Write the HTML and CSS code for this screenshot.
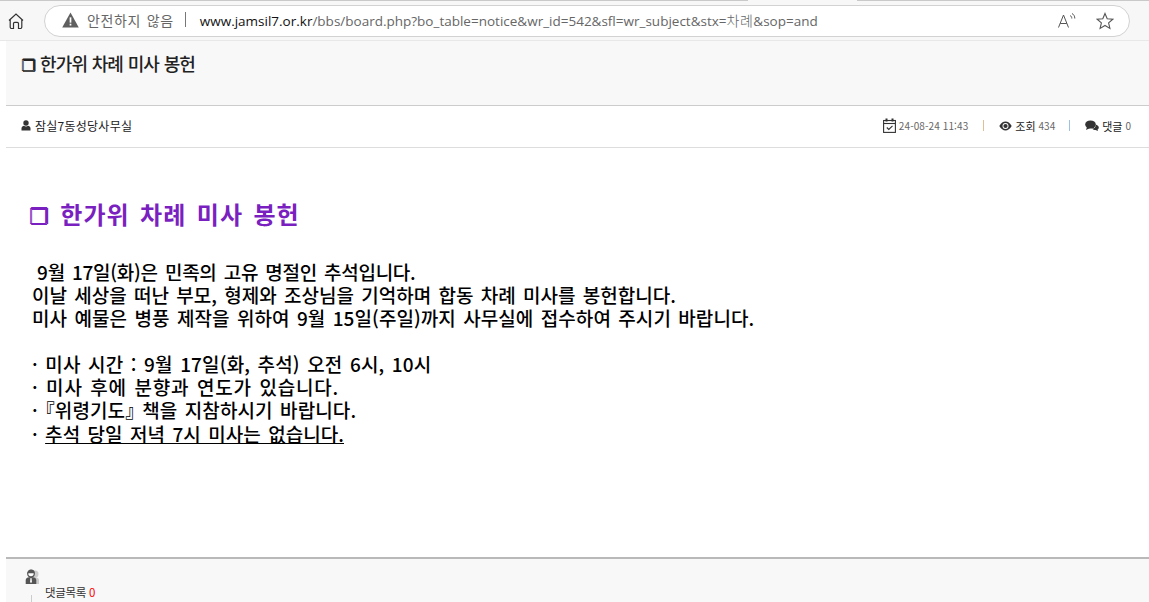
FILE: index.html
```html
<!DOCTYPE html>
<html lang="ko">
<head>
<meta charset="utf-8">
<title>한가위 차례 미사 봉헌</title>
<link rel="stylesheet" href="styles.css">
</head>
<body>
<div class="chrome">
  <div class="tabline"><span class="tl a"></span><span class="tl b"></span></div>
  <div class="toolbar">
    <svg class="home" width="18" height="18" viewBox="0 0 18 18" fill="none" stroke="#333" stroke-width="1.2"><path d="M2 8.5 9 2l7 6.500M3.200 7.500v7.500a1.500 1.500 0 0 0 1.500 1.500h1.800v-5a1.200 1.200 0 0 1 1.200-1.200h2.600a1.200 1.200 0 0 1 1.200 1.200v5h1.800a1.500 1.500 0 0 0 1.500-1.500V7.500"/></svg>
    <div class="omnibox">
      <svg class="warn" width="17" height="16" viewBox="0 0 16 15"><path d="M8 .5 15.800 14.500H.2z" fill="#5f5f5f"/><rect x="7.200" y="5" width="1.600" height="5" fill="#fff"/><rect x="7.200" y="11" width="1.600" height="1.700" fill="#fff"/></svg>
      <span class="insecure">안전하지 않음</span>
      <span class="sep"></span>
      <span class="url"><b>www.jamsil7.or.kr</b>/bbs/board.php?bo_table=notice&amp;wr_id=542&amp;sfl=wr_subject&amp;stx=<span class="q">차례</span>&amp;sop=and</span>
      <span class="omni-icons">
        <svg width="20" height="18" viewBox="0 0 20 18" fill="none" stroke="#555" stroke-width="1"><path d="M1.500 15.500 6.500 3l5 12.500M3.200 11.500h6.600M13 3.500c1.200.6 1.800 1.500 1.800 3M15 1.500c1.800 1 2.800 2.600 2.800 5"/></svg>
        <svg width="18" height="18" viewBox="0 0 18 18" fill="none" stroke="#555" stroke-width="1.100"><path d="M9 1.500 11.200 6.700l5.600.5-4.200 3.700 1.300 5.500L9 13.500l-4.900 2.900 1.300-5.500L1.200 7.200l5.600-.5z"/></svg>
      </span>
    </div>
  </div>
</div>
<main class="page">
  <header class="head">
    <h1 class="title"><span class="glyph">❐</span> 한가위 차례 미사 봉헌</h1>
  </header>
  <section class="info">
    <div class="author">
      <svg width="10" height="11" viewBox="0 0 10 11" fill="#333"><circle cx="5" cy="3" r="2.700"/><path d="M.5 10.500V8.300C.5 6.800 2 6 3 5.800c1.200.8 2.800.8 4 0 1 .2 2.500 1 2.500 2.500v2.200z"/></svg>
      <span>잠실7동성당사무실</span>
    </div>
    <div class="meta">
      <span class="mi">
        <svg width="13" height="15" viewBox="0 0 13 15" fill="none" stroke="#333" stroke-width="1.100"><rect x=".6" y="2.500" width="11.800" height="11.900"/><path d="M.6 5.500h11.800" /><path d="M3.500.5v3M9.500.5v3" stroke-width="2"/><path d="M3.800 9.500l2 2 3.700-3.700"/></svg>
        <span class="num date">24-08-24 11:43</span>
      </span>
      <i class="bar orange"></i>
      <span class="mi">
        <svg width="13" height="10" viewBox="0 0 13 10"><path d="M.3 5C2 2 4.200.6 6.500.6S11 2 12.700 5C11 8 8.800 9.400 6.500 9.400S2 8 .3 5z" fill="#333"/><circle cx="6.500" cy="5" r="3" fill="#fff"/><circle cx="6.500" cy="5" r="2.100" fill="#333"/></svg>
        <span class="lab">조회</span> <span class="num">434</span>
      </span>
      <i class="bar blue"></i>
      <span class="mi">
        <svg width="14" height="11" viewBox="0 0 14 11" fill="#333"><ellipse cx="5.500" cy="4.500" rx="5.300" ry="4.100"/><path d="M2 7l-1 3 4-2zM10.500 4.500c2 .5 3.300 1.700 3.300 3 0 1-.6 1.700-1.300 2.200l.5 1.300-2.500-1c-1.300 0-2.500-.4-3.200-1.300 2 0 3.900-2 3.200-4.200z"/></svg>
        <span class="lab">댓글</span> <span class="num">0</span>
      </span>
    </div>
  </section>
  <article class="content">
    <h2 class="heading"><span class="glyph">❐</span> 한가위 차례 미사 봉헌</h2>
    <p class="t1">&nbsp;9월 17일(화)은 민족의 고유 명절인 추석입니다.</p>
    <p>이날 세상을 떠난 부모, 형제와 조상님을 기억하며 합동 차례 미사를 봉헌합니다.</p>
    <p class="t3">미사 예물은 병풍 제작을 위하여 9월 15일(주일)까지 사무실에 접수하여 주시기 바랍니다.</p>
    <p>&nbsp;</p>
    <p class="t5">· 미사 시간 : 9월 17일(화, 추석) 오전 6시, 10시</p>
    <p class="t6">· 미사 후에 분향과 연도가 있습니다.</p>
    <p class="t7">· <span class="brk">『</span>위령기도<span class="brk">』</span> 책을 지참하시기 바랍니다.</p>
    <p class="t8">· <u>추석 당일 저녁 7시 미사는 없습니다.</u></p>
  </article>
  <section class="comments">
    <svg class="avatar" width="15" height="16" viewBox="0 0 15 16"><circle cx="10" cy="5" r="3.500" fill="#ccc"/><path d="M7 15V10c0-1 2-2 3-2s4 1 4 3v4z" fill="#ccc"/><circle cx="6" cy="4.500" r="3.300" fill="#fff" stroke="#555" stroke-width="1.200"/><path d="M2.500 4.200C3 1.500 4.500.8 6 .8s3 .7 3.500 3.400z" fill="#555"/><path d="M.7 15v-4c0-2 2-3 5.300-3s5.300 1 5.300 3v4z" fill="#555"/><path d="M5.500 9h1l.5 4.500H5z" fill="#fff"/></svg>
    <div class="clabel">댓글목록 <em>0</em></div>
    <span class="tick"></span>
  </section>
</main>
</body>
</html>
```
FILE: styles.css
```css
* { box-sizing: border-box; }
html, body { margin: 0; height: 602px; overflow: hidden; background: #fff; }
body { font-family: "Noto Sans CJK KR", "Noto Sans", sans-serif; color: #000; }
.chrome { height: 41px; background: #f7f7f7; border-bottom: 1px solid #e8e8e8; }
.tabline { height: 1px; display: flex; justify-content: space-between; background: #f7f7f7; }
.tl { display: block; height: 1px; background: #c9c9c9; }
.tl.a { width: 748px; }
.tl.b { width: 292px; }
.toolbar { display: flex; align-items: center; height: 39px; padding: 3px 19px 3px 7px; }
.home { flex: none; margin-right: 19px; }
.omnibox { flex: 1; height: 32px; display: flex; align-items: center; padding: 0 16px 2px 17px; background: #fff; border: 1px solid #d2d2d2; border-radius: 16px; }
.warn { flex: none; margin-right: 8px; }
.insecure { color: #666; font-size: 14px; letter-spacing: .65px; word-spacing: 1px; }
.sep { width: 1px; height: 15px; background: #777; margin: 0 14px 0 11px; }
.url { color: #666; font-size: 13.500px; white-space: nowrap; font-family: "Open Sans", "Noto Sans CJK KR", sans-serif; }
.url b { color: #111; font-weight: 400; }
.url .q { font-size: 14px; letter-spacing: .5px; font-weight: 300; }
.omni-icons { margin-left: auto; display: flex; gap: 19px; align-items: center; position: relative; left: 1px; top: 1px; }
.page { margin-left: 6px; }
.head { height: 65px; background: #f8f8f8; border-bottom: 1px solid #ccc; padding: 10px 0 0 15px; }
.title { margin: 0; font-size: 18px; line-height: 24px; font-weight: 500; letter-spacing: -.9px; word-spacing: .5px; color: #222; }
.title .glyph { margin-right: 1px; text-shadow: 1px 1px 0 #222; font-size: 16px; }
.glyph { font-family: "DejaVu Sans", sans-serif; }
.info { height: 42px; display: flex; justify-content: space-between; align-items: center; padding: 0 18px 2px 15px; border-bottom: 1px solid #ddd; }
.author { display: flex; align-items: center; gap: 4px; font-size: 12px; letter-spacing: .25px; color: #222; }
.meta { display: flex; align-items: center; font-size: 10px; color: #666; }
.mi { display: inline-flex; align-items: center; gap: 3px; }
.date { letter-spacing: .1px; }
.lab { color: #222; font-size: 11px; }
.bar { display: block; width: 1px; height: 11px; margin: 0 15px; }
.bar.orange { background: #e0c090; }
.bar.blue { background: #9cc0e6; margin-left: 14px; }
.content { height: 409px; padding: 50px 0 0 26px; font-size: 19px; line-height: 23px; font-weight: 500; word-spacing: 2px; }
.content p { margin: 0; }
.heading { margin: 0 0 27px -3px; font-size: 24px; line-height: 32px; font-weight: 700; color: #7a1fc0; letter-spacing: .95px; word-spacing: 3px; }
.heading .glyph { font-size: 22px; text-shadow: 1px 1px 0 #7a1fc0; }
.content .t1 { margin-left: -2px; letter-spacing: -.25px; }
.t3 { letter-spacing: .06px; }
.t5 { letter-spacing: .15px; }
.t6 { letter-spacing: .8px; word-spacing: 1.500px; }
.t7 { letter-spacing: .1px; }
.content .t8 { letter-spacing: .05px; margin-top: 1px; }
.brk { font-feature-settings: "halt"; }
.comments { position: relative; height: 45px; background: #f8f8f8; border-top: 2px solid #b9b9b9; padding: 10px 0 0 19px; }
.avatar { display: block; }
.clabel { margin: 0 0 0 20px; font-size: 11.500px; letter-spacing: -.3px; color: #333; line-height: 14px; }
.clabel em { font-style: normal; color: #f00; }
.tick { position: absolute; left: 25px; top: 36px; width: 1px; height: 8px; background: #ccc; }
```
